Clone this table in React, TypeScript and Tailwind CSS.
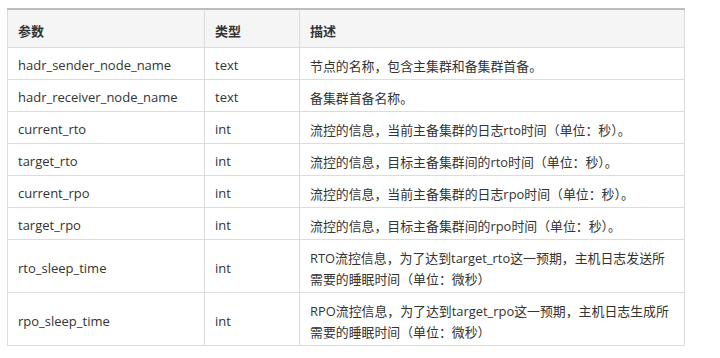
const rows: { name: string; type: string; desc: string; tall?: boolean }[] = [
  { name: "hadr_sender_node_name", type: "text", desc: "节点的名称，包含主集群和备集群首备。" },
  { name: "hadr_receiver_node_name", type: "text", desc: "备集群首备名称。" },
  { name: "current_rto", type: "int", desc: "流控的信息，当前主备集群的日志rto时间（单位：秒）。" },
  { name: "target_rto", type: "int", desc: "流控的信息，目标主备集群间的rto时间（单位：秒）。" },
  { name: "current_rpo", type: "int", desc: "流控的信息，当前主备集群的日志rpo时间（单位：秒）。" },
  { name: "target_rpo", type: "int", desc: "流控的信息，目标主备集群间的rpo时间（单位：秒）。" },
  {
    name: "rto_sleep_time",
    type: "int",
    desc: "RTO流控信息，为了达到target_rto这一预期，主机日志发送所需要的睡眠时间（单位：微秒）",
    tall: true,
  },
  {
    name: "rpo_sleep_time",
    type: "int",
    desc: "RPO流控信息，为了达到target_rpo这一预期，主机日志生成所需要的睡眠时间（单位：微秒）",
    tall: true,
  },
];

export default function App() {
  return (
    <div
      className="w-[720px] h-[358px] bg-white pt-2 pl-[7px] text-[13px] text-[#333]"
      style={{ fontFamily: '"Open Sans", "Noto Sans CJK SC", sans-serif' }}
    >
      <table className="w-[678px] border-collapse table-fixed border-t-2 border-t-[#bdbdbd]">
        <colgroup>
          <col className="w-[197px]" />
          <col className="w-[95px]" />
          <col />
        </colgroup>
        <thead>
          <tr className="h-[38px] bg-[#f5f5f5]">
            <th className="border border-[#dcdcdc] border-t-0 text-left font-semibold px-[10px] pt-[6px]">参数</th>
            <th className="border border-[#dcdcdc] border-t-0 text-left font-semibold px-[10px] pt-[6px]">类型</th>
            <th className="border border-[#dcdcdc] border-t-0 text-left font-semibold px-[10px] pt-[6px]">描述</th>
          </tr>
        </thead>
        <tbody>
          {rows.map((r) => (
            <tr key={r.name} className={r.tall ? "h-[53px]" : "h-[32px]"}>
              <td className="border border-[#dcdcdc] px-[10px] pt-[6px]">{r.name}</td>
              <td className="border border-[#dcdcdc] px-[10px] pt-[6px]">{r.type}</td>
              <td className="border border-[#dcdcdc] pl-[10px] pr-[12px] pt-[6px] text-[12.9px] leading-[21px]">
                {r.desc}
              </td>
            </tr>
          ))}
        </tbody>
      </table>
    </div>
  );
}
